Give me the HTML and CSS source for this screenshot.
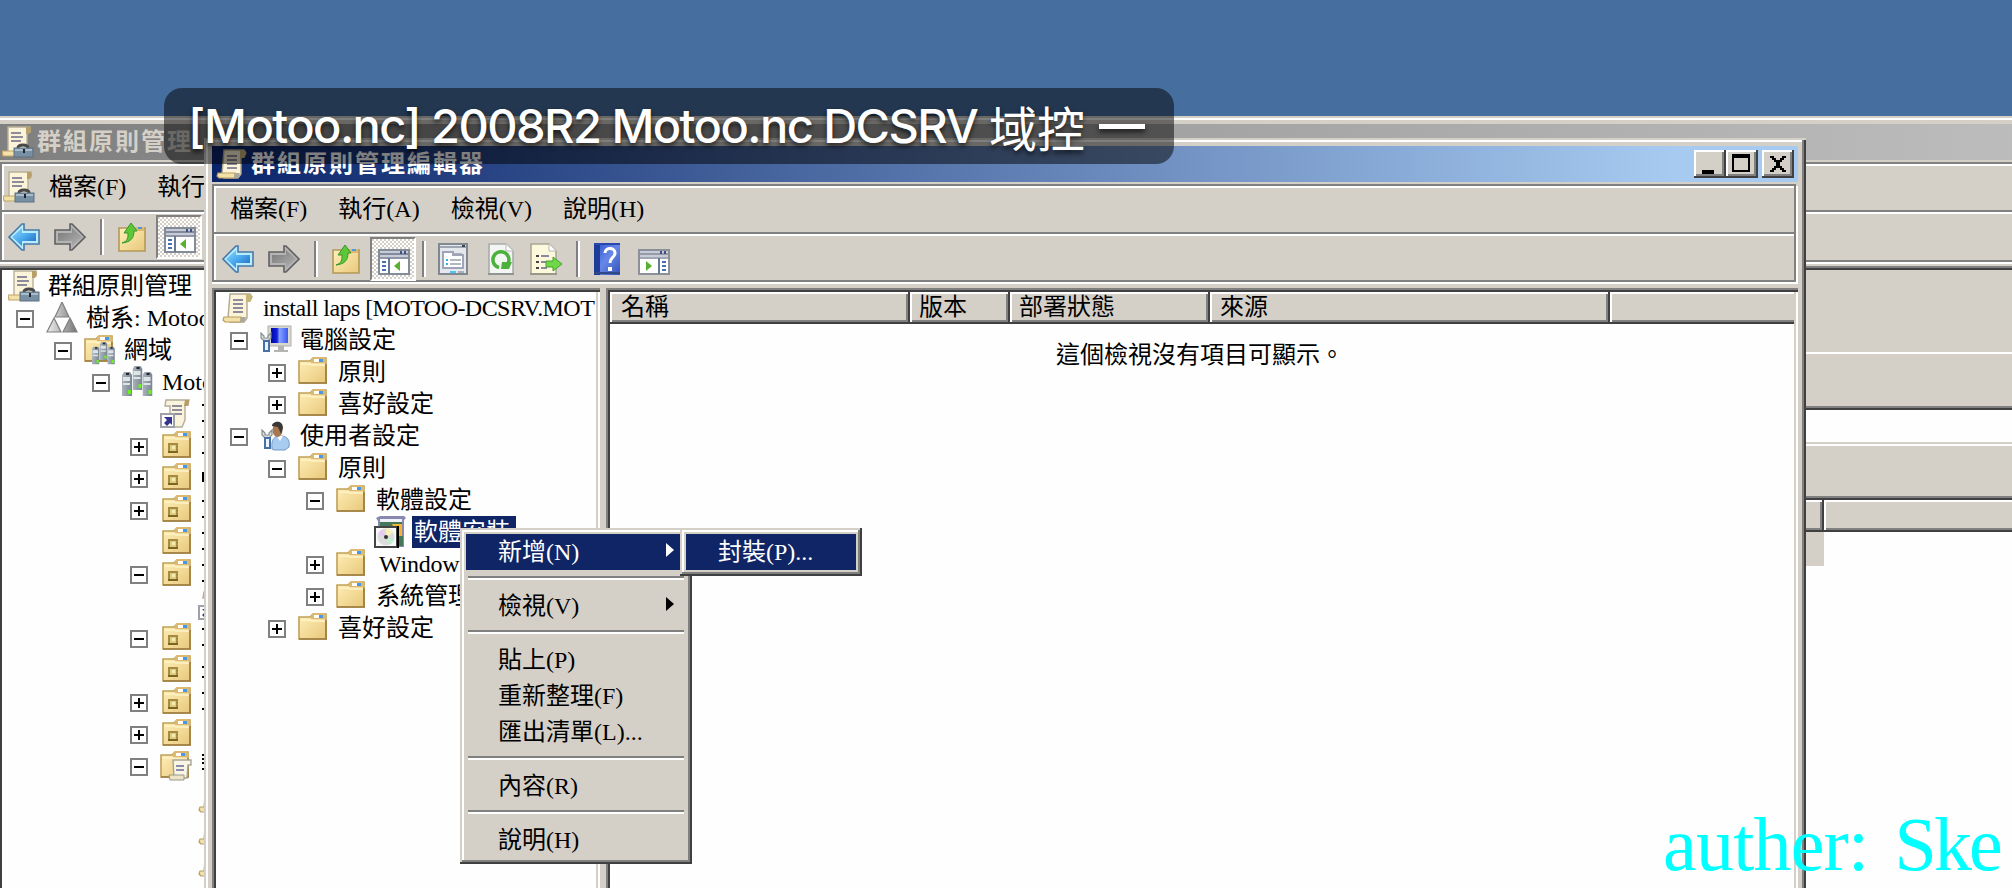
FILE: index.html
```html
<!DOCTYPE html>
<html lang="zh-Hant">
<head>
<meta charset="utf-8">
<title>群組原則管理編輯器</title>
<link rel="stylesheet" href="styles.css">
</head>
<body>
<svg class="defs" width="0" height="0">
  <defs>
    <linearGradient id="gFold" x1="0" y1="0" x2="1" y2="1"><stop offset="0" stop-color="#fff0b8"/><stop offset="1" stop-color="#e8c87c"/></linearGradient>
    <linearGradient id="gBlue" x1="0" y1="0" x2="1" y2="1"><stop offset="0" stop-color="#8fdcff"/><stop offset=".5" stop-color="#49a8ee"/><stop offset="1" stop-color="#1f62b8"/></linearGradient>
    <linearGradient id="gGray" x1="0" y1="0" x2="1" y2="1"><stop offset="0" stop-color="#777"/><stop offset="1" stop-color="#b4b4b4"/></linearGradient>
    <linearGradient id="gScreen" x1="0" y1="0" x2="1" y2="0"><stop offset="0" stop-color="#0008a8"/><stop offset=".35" stop-color="#1020d8"/><stop offset=".5" stop-color="#88a0ff"/><stop offset="1" stop-color="#3858f0"/></linearGradient>
    <linearGradient id="gHelp" x1="0" y1="0" x2="1" y2="1"><stop offset="0" stop-color="#2850c8"/><stop offset=".5" stop-color="#6888e8"/><stop offset="1" stop-color="#3050b8"/></linearGradient>
    <linearGradient id="gSrv" x1="0" y1="0" x2="1" y2="0"><stop offset="0" stop-color="#aab4bc"/><stop offset="1" stop-color="#78858f"/></linearGradient>
    <linearGradient id="gTri" x1="0" y1="0" x2="1" y2="0"><stop offset="0" stop-color="#f0f0f0"/><stop offset="1" stop-color="#757575"/></linearGradient>
  </defs>
  <symbol id="scroll" viewBox="0 0 32 32">
    <path d="M8 2h20l2 3-2 4h-3v17l-3 4H8V26H6z" fill="#fbf4d8" stroke="#b0a890" stroke-width="1.4"/>
    <path d="M24 2h4l2 3-2 5h-4z" fill="#c8b478"/>
    <path d="M2 25h17v5H3l-2-2z" fill="#f2e2a8" stroke="#b89c60" stroke-width="1.2"/>
    <path d="M19 25h5l-2 5h-4z" fill="#a8a8a0"/>
    <path d="M11 8h10M11 12h10M11 16h10M11 20h10" stroke="#8e8c9c" stroke-width="2"/>
  </symbol>
  <symbol id="scrollbox" viewBox="0 0 32 32">
    <path d="M6 1h22v5h-3v20H6z" fill="#fbf4d8" stroke="#b8b098" stroke-width="1.4"/>
    <path d="M24 1h4l1 3-2 4h-3z" fill="#b8a068"/>
    <path d="M0 25h15v5H1z" fill="#f2e2a8" stroke="#c0a468" stroke-width="1.2"/>
    <path d="M9 7h10M9 11h12M9 15h10" stroke="#8e8c9c" stroke-width="2"/>
    <path d="M16 22c0-4 10-4 10 0" fill="none" stroke="#484848" stroke-width="3"/>
    <rect x="12" y="22" width="19" height="9" fill="#7890a4" stroke="#5c7080"/>
    <path d="M13 24h17" stroke="#a8bccc" stroke-width="2"/><rect x="21" y="23" width="2" height="4" fill="#223"/>
  </symbol>
  <symbol id="link" viewBox="0 0 32 32">
    <path d="M6 2h23l-1 5h-3v15l-3 7H10V8H5z" fill="#fbf4dc" stroke="#b4ac98" stroke-width="1.4"/>
    <path d="M25 2h4l-1 6h-4z" fill="#b89c60"/><path d="M12 8h10M12 12h10M14 16h8" stroke="#8e8c9c" stroke-width="2"/>
    <rect x="1" y="16" width="13" height="13" fill="#fff" stroke="#a0a0a8" stroke-width="2"/>
    <path d="M4 19h8v8l-2-2-3 3-3-3 3-3z" fill="#34348c"/>
  </symbol>
  <symbol id="folder" viewBox="0 0 32 32">
    <path d="M1 5h11l3-3h13v25H1z" fill="url(#gFold)" stroke="#c0a058" stroke-width="1.6"/>
    <path d="M13 7V3l2-2h11l2 2v4z" fill="#dcb870"/><rect x="16" y="3" width="5" height="3" fill="#fff"/><rect x="21" y="3" width="4" height="3" fill="#4c98e0"/>
    <path d="M3 8h9l2 1h13" stroke="#fff4c8" stroke-width="1.5" fill="none"/><path d="M1 27h28M28 8v19" stroke="#9c7c40" stroke-width="1.6"/>
  </symbol>
  <symbol id="ou" viewBox="0 0 32 32">
    <g transform="translate(2)"><use href="#folder"/><rect x="7" y="14" width="8" height="8" fill="#dccc80" stroke="#a48c44" stroke-width="2"/><path d="M6 22h10" stroke="#7c6424" stroke-width="2"/><rect x="10" y="16" width="3" height="3" fill="#f4ecb0"/></g>
  </symbol>
  <symbol id="foldscroll" viewBox="0 0 32 32">
    <use href="#folder"/><path d="M13 10h18v5h-3l-1 13H14z" fill="#faf6e4" stroke="#a8a498" stroke-width="1.4"/><path d="M9 25h15v5H10z" fill="#ece4c4" stroke="#98988c"/><path d="M16 16h8M16 20h8" stroke="#8e8cac" stroke-width="2"/>
  </symbol>
  <symbol id="forest" viewBox="0 0 32 32">
    <path d="M16 0l7 15H9zM8 16l7 14H1zM24 16l7 14H17z" fill="url(#gTri)" stroke="#808080" stroke-width="1.2"/>
  </symbol>
  <symbol id="srv" viewBox="0 0 10 24">
    <path d="M0 3l2-3h6l2 3v21H0z" fill="url(#gSrv)"/><path d="M1 5h7v4H1zM1 11h7v2H1z" fill="#dce4e8"/><path d="M4 1h3v2H4z" fill="#223"/><rect x="6" y="18" width="3" height="4" fill="#6cf020"/>
  </symbol>
  <symbol id="domain" viewBox="0 0 32 32">
    <use href="#srv" x="10.5" y="0" width="10" height="24"/><use href="#srv" x="0" y="6" width="10" height="24"/><use href="#srv" x="20.500" y="6" width="10" height="24"/>
  </symbol>
  <symbol id="folddomain" viewBox="0 0 32 32">
    <use href="#folder"/><use href="#domain" x="8" y="8" width="24" height="24"/>
  </symbol>
  <symbol id="wrench" viewBox="0 0 12 20">
    <path d="M1 1v5l3 3h4l3-3V1L8 4v2H4V4z" fill="#d8dcdc" stroke="#889090" stroke-width="1.2"/><rect x="4" y="9" width="5" height="10" fill="#e8f4ff" stroke="#4870a8" stroke-width="2"/>
  </symbol>
  <symbol id="computer" viewBox="0 0 32 32">
    <rect x="8" y="2" width="23" height="20" fill="#d8d8d0" stroke="#b0b0a8"/><rect x="11" y="4" width="17" height="15" fill="url(#gScreen)"/>
    <path d="M18 22h6v4h4v2H14v-2h4z" fill="#b4b4b0"/><use href="#wrench" x="0" y="8" width="12" height="20"/>
  </symbol>
  <symbol id="user" viewBox="0 0 32 32">
    <path d="M12 29c-1-10 2-13 9-13s9 5 8 11l-4 3H14z" fill="#a8ccf0" stroke="#7898c0"/><path d="M17 16l3 5 3-5z" fill="#fff"/>
    <ellipse cx="17.500" cy="10" rx="5" ry="7" fill="#a87850"/><path d="M12 6c0-5 11-7 11 2l-2 6-3-7z" fill="#3c3836"/>
    <use href="#wrench" x="1" y="9" width="12" height="20"/>
  </symbol>
  <symbol id="soft" viewBox="0 0 32 32">
    <path d="M2 2l4-2h24l2 2-2 2v27H4V5z" fill="#8888b0"/><path d="M6 3h22v3H6z" fill="#f0f0f8"/><path d="M6 6h22v5H6z" fill="#447858"/><path d="M18 8h10v14h-4z" fill="#f4b430"/><path d="M24 20h5v10h-5z" fill="#447858"/>
    <rect x="1" y="11" width="22" height="20" fill="#f8f8f8" stroke="#444" stroke-width="2"/><path d="M24 10v22" stroke="#000" stroke-width="2"/>
    <circle cx="12" cy="21" r="8.500" fill="#dcdcdc"/><path d="M12 21V12.500a8.500 8.500 0 0 1 7 4z" fill="#f8f0b8"/><path d="M12 21l8 3a8.500 8.500 0 0 1-5 5z" fill="#c0f0d0"/><path d="M12 21l-8-3a8 8 0 0 1 4-4z" fill="#e8c8f4"/><circle cx="12" cy="21" r="2" fill="#333"/>
  </symbol>
  <symbol id="back" viewBox="0 0 32 30">
    <path d="M1 15L14 2h2v6h15v14H16v6h-2z" fill="#b8ecff" stroke="#4878a8" stroke-width="1.600"/><path d="M4 15l10-9v5h14v8H14v5z" fill="url(#gBlue)"/>
  </symbol>
  <symbol id="fwd" viewBox="0 0 32 30">
    <path d="M31 15L18 2h-2v6H1v14h15v6h2z" fill="#b4b4b4" stroke="#606060" stroke-width="1.600"/><path d="M28 15l-10-9v5H4v8h14v5z" fill="url(#gGray)"/>
  </symbol>
  <symbol id="up" viewBox="0 0 28 30">
    <path d="M1 6h26v23H1z" fill="url(#gFold)" stroke="#b49858" stroke-width="1.600"/><path d="M16 5h10v4H16z" fill="#dcb870"/><path d="M20 5h4v2h-4z" fill="#4c98e0"/>
    <path d="M4 21c6-2 6-5 6-10H6l7-10 6 8h-3c0 7-3 11-12 12z" fill="#5cc838" stroke="#38942c"/>
  </symbol>
  <symbol id="pane" viewBox="0 0 32 26">
    <rect x="1" y="1" width="30" height="24" fill="#fff" stroke="#848c98" stroke-width="2"/><path d="M2 2h28v6H2z" fill="#c8ccd8"/><path d="M2 5h28M2 9h28" stroke="#6c7488" stroke-width="1.600"/><path d="M23 2v3M27 2v3" stroke="#405080" stroke-width="2"/>
    <path d="M11 9v16" stroke="#687898" stroke-width="2"/><path d="M4 13h4M4 17h4M4 21h4" stroke="#4870b0" stroke-width="2"/><path d="M22 12v10l-6-5z" fill="#58b030"/>
  </symbol>
  <symbol id="pane2" viewBox="0 0 32 26">
    <rect x="1" y="1" width="30" height="24" fill="#fff" stroke="#8c9098" stroke-width="2"/><path d="M2 2h28v6H2z" fill="#c8ccd8"/><path d="M2 5h28M2 9h28" stroke="#848c98" stroke-width="1.600"/><path d="M23 2v3M27 2v3" stroke="#405080" stroke-width="2"/>
    <path d="M21 9v16" stroke="#687898" stroke-width="2"/><path d="M24 13h4M24 17h4M24 21h4" stroke="#4870b0" stroke-width="2"/><path d="M8 12v10l6-5z" fill="#58b030"/>
  </symbol>
  <symbol id="props" viewBox="0 0 30 32">
    <rect x="1" y="1" width="28" height="30" fill="#e4e8ec" stroke="#808890" stroke-width="2"/><path d="M2 4h26" stroke="#8890a0" stroke-width="1.500"/><path d="M24 2h3v2h-3z" fill="#345"/>
    <path d="M5 9h10v3h10v13H5z" fill="#fff" stroke="#a0a4b8" stroke-width="2"/><path d="M12 17h11M12 21h11M16 11h8" stroke="#98a0a8" stroke-width="1.600"/><path d="M8 17h2M8 21h2" stroke="#30b0e8" stroke-width="2"/><path d="M12 29h6" stroke="#48c8f8" stroke-width="2"/><path d="M20 29h6" stroke="#a8b0b8" stroke-width="2"/>
  </symbol>
  <symbol id="refresh" viewBox="0 0 26 32">
    <path d="M1 1h17l7 7v23H1z" fill="#f4f6f4" stroke="#a8acac" stroke-width="1.600"/><path d="M18 1v7h7" fill="#fff" stroke="#b8b8b8"/><path d="M11 24.500a8 8 0 1 1 9-4" fill="none" stroke="#4cb03c" stroke-width="3.500"/><path d="M14 19l10 0-3 7h-8z" fill="#4cb03c"/><path d="M0 31h26" stroke="#909494" stroke-width="2"/>
  </symbol>
  <symbol id="export" viewBox="0 0 32 32">
    <path d="M1 1h18l7 7v23H1z" fill="#fcf8dc" stroke="#a8a898" stroke-width="1.600"/><path d="M19 1v7h7" fill="#fff" stroke="#b8b8b0"/><path d="M6 13h3M6 19h3M6 25h3" stroke="#444" stroke-width="2"/><path d="M11 13h8M11 19h6M11 25h6" stroke="#8c88a0" stroke-width="2"/>
    <path d="M16 18h7v-4l9 7-9 7v-4h-7z" fill="#70d848" stroke="#44a030"/><path d="M0 31h27" stroke="#989888" stroke-width="2"/>
  </symbol>
  <symbol id="help" viewBox="0 0 26 32">
    <rect width="26" height="32" fill="url(#gHelp)"/><path d="M0 0h6v32H0z" fill="#1c3c98"/><path d="M0 0h26v2H0z" fill="#2848b0"/><path d="M0 30h26" stroke="#304888" stroke-width="2"/>
    <path d="M11 10c0-6 10-6 10 0 0 5-5 4-5 10" fill="none" stroke="#fff" stroke-width="3"/><rect x="14" y="24" width="4" height="4" fill="#fff"/>
  </symbol>
</svg>

<main class="desktop">
  <section class="window back-window">
    <div class="titlebar inactive"><svg class="ico"><use href="#scrollbox"/></svg><span class="title">群組原則管理</span></div>
    <div class="bars">
      <div class="menubar"><svg class="ico"><use href="#scrollbox"/></svg><span>檔案(F)</span><span>執行(A)</span></div>
      <div class="toolbar">
        <svg class="t-arrow"><use href="#back"/></svg><svg class="t-arrow next"><use href="#fwd"/></svg><i class="tsep"></i>
        <svg class="t-up"><use href="#up"/></svg><span class="pressed"><svg class="t-pane"><use href="#pane"/></svg></span>
      </div>
    </div>
    <div class="back-body">
      <div class="tree back-tree">
        <div class="row l0"><svg class="ico"><use href="#scrollbox"/></svg><span>群組原則管理</span></div>
        <div class="row l1"><i class="box"></i><svg class="ico"><use href="#forest"/></svg><span>樹系: Motoo.nc</span></div>
        <div class="row l2"><i class="box"></i><svg class="ico"><use href="#folddomain"/></svg><span>網域</span></div>
        <div class="row l3"><i class="box"></i><svg class="ico"><use href="#domain"/></svg><span>Motoo.nc</span></div>
        <div class="row l4"><svg class="ico"><use href="#link"/></svg><b class="cut"></b></div>
        <div class="row l4"><i class="box plus"></i><svg class="ico"><use href="#ou"/></svg><b class="cut"></b></div>
        <div class="row l4"><i class="box plus"></i><svg class="ico"><use href="#ou"/></svg><b class="cut solid"></b></div>
        <div class="row l4"><i class="box plus"></i><svg class="ico"><use href="#ou"/></svg><b class="cut"></b></div>
        <div class="row l4"><svg class="ico"><use href="#ou"/></svg><b class="cut"></b></div>
        <div class="row l4"><i class="box"></i><svg class="ico"><use href="#ou"/></svg><b class="cut"></b></div>
        <div class="row l5"><svg class="ico"><use href="#link"/></svg></div>
        <div class="row l4"><i class="box"></i><svg class="ico"><use href="#ou"/></svg><b class="cut"></b></div>
        <div class="row l4"><svg class="ico"><use href="#ou"/></svg><b class="cut low"></b></div>
        <div class="row l4"><i class="box plus"></i><svg class="ico"><use href="#ou"/></svg><b class="cut"></b></div>
        <div class="row l4"><i class="box plus"></i><svg class="ico"><use href="#ou"/></svg></div>
        <div class="row l4"><i class="box"></i><svg class="ico"><use href="#foldscroll"/></svg><b class="cut dots"></b></div>
        <div class="row l5"><svg class="ico"><use href="#scroll"/></svg></div>
        <div class="row l5"><svg class="ico"><use href="#scroll"/></svg></div>
        <div class="row l5"><svg class="ico"><use href="#scroll"/></svg></div>
      </div>
      <div class="details">
        <div class="d-head"></div><div class="d-tabs"></div><div class="d-field"></div><div class="d-label"></div>
        <div class="d-cols"><i></i><i></i></div><div class="d-cell"></div>
      </div>
    </div>
  </section>

  <section class="window front-window">
    <div class="titlebar active">
      <svg class="ico"><use href="#scroll"/></svg><span class="title">群組原則管理編輯器</span>
      <div class="controls">
        <i class="btn"><svg viewBox="0 0 28 24"><path d="M6 18h12v4H6z"/></svg></i>
        <i class="btn"><svg viewBox="0 0 28 24"><path d="M4 2h18v18H4zM6 6v12h14V6z" fill-rule="evenodd"/></svg></i>
        <i class="btn close"><svg viewBox="0 0 28 24"><path d="M6 4h4v2h2v2h4V6h2V4h4v2h-2v2h-2v2h-2v4h2v2h2v2h2v2h-4v-2h-2v-2h-4v2h-2v2H6v-2h2v-2h2v-2h2v-4h-2V8H8V6H6z"/></svg></i>
      </div>
    </div>
    <div class="bars">
      <div class="menubar"><span>檔案(F)</span><span>執行(A)</span><span>檢視(V)</span><span>說明(H)</span></div>
      <div class="toolbar">
        <svg class="t-arrow"><use href="#back"/></svg><svg class="t-arrow next"><use href="#fwd"/></svg><i class="tsep"></i>
        <svg class="t-up"><use href="#up"/></svg><span class="pressed"><svg class="t-pane"><use href="#pane"/></svg></span><i class="tsep tight"></i>
        <svg class="t-props"><use href="#props"/></svg><svg class="t-refresh"><use href="#refresh"/></svg><svg class="t-export"><use href="#export"/></svg><i class="tsep"></i>
        <svg class="t-help"><use href="#help"/></svg><svg class="t-pane last"><use href="#pane2"/></svg>
      </div>
    </div>
    <div class="front-body">
      <div class="tree front-tree">
        <div class="row l0"><svg class="ico"><use href="#scroll"/></svg><span class="root">install laps [MOTOO-DCSRV.MOT</span></div>
        <div class="row l1"><i class="box"></i><svg class="ico"><use href="#computer"/></svg><span>電腦設定</span></div>
        <div class="row l2"><i class="box plus"></i><svg class="ico"><use href="#folder"/></svg><span>原則</span></div>
        <div class="row l2"><i class="box plus"></i><svg class="ico"><use href="#folder"/></svg><span>喜好設定</span></div>
        <div class="row l1"><i class="box"></i><svg class="ico"><use href="#user"/></svg><span>使用者設定</span></div>
        <div class="row l2"><i class="box"></i><svg class="ico"><use href="#folder"/></svg><span>原則</span></div>
        <div class="row l3"><i class="box"></i><svg class="ico"><use href="#folder"/></svg><span>軟體設定</span></div>
        <div class="row l4"><svg class="ico"><use href="#soft"/></svg><span class="selected">軟體安裝</span></div>
        <div class="row l3"><i class="box plus"></i><svg class="ico"><use href="#folder"/></svg><span class="latin">Windows 設定</span></div>
        <div class="row l3"><i class="box plus"></i><svg class="ico"><use href="#folder"/></svg><span>系統管理範本</span></div>
        <div class="row l2"><i class="box plus"></i><svg class="ico"><use href="#folder"/></svg><span>喜好設定</span></div>
      </div>
      <div class="list">
        <div class="cols"><span>名稱</span><span>版本</span><span>部署狀態</span><span>來源</span><span></span></div>
        <p class="empty">這個檢視沒有項目可顯示。</p>
      </div>
    </div>
  </section>

  <div class="popup context">
    <div class="item hot">新增(N)<i class="arrow"></i></div><hr>
    <div class="item">檢視(V)<i class="arrow"></i></div><hr>
    <div class="item">貼上(P)</div><div class="item">重新整理(F)</div><div class="item">匯出清單(L)...</div><hr>
    <div class="item">內容(R)</div><hr>
    <div class="item">說明(H)</div>
  </div>
  <div class="popup submenu"><div class="item hot">封裝(P)...</div></div>

  <div class="banner"><span class="b-main">[Motoo.nc] 2008R2 Motoo.nc DCSRV</span><span class="b-cjk">域控</span><i class="dash"></i></div>
  <div class="signature">auther: <span>Ske</span></div>
</main>
</body>
</html>
```

FILE: styles.css
```css
:root { --face: #d4d0c8; --mid: #808080; --dark: #404040; --navy: #0f2566; }
* { box-sizing: border-box; }
body { margin: 0; overflow: hidden; }
.defs { position: absolute; }
.desktop {
  position: relative; width: 2012px; height: 888px; overflow: hidden; background: #466fa0;
  font: 24px/32px "Liberation Serif", "Noto Sans CJK TC", serif; color: #000; white-space: nowrap;
}
.ico { width: 32px; height: 32px; flex: none; }

/* windows */
.window { position: absolute; background: var(--face); overflow: hidden; display: flex; flex-direction: column; }
.back-window { left: 0; top: 116px; width: 2152px; height: 772px; box-shadow: inset 0 2px var(--face), inset 0 4px #fff; padding-top: 8px; }
.front-window {
  left: 204px; top: 138px; width: 1602px; height: 760px; padding: 8px 8px 0;
  box-shadow: inset 2px 2px var(--face), inset -2px 0 var(--dark), inset -4px 0 var(--mid), inset 4px 4px #fff;
}
.titlebar { height: 36px; flex: none; display: flex; align-items: center; font-weight: bold; letter-spacing: 2px; }
.inactive { background: linear-gradient(90deg, #808080, #c0c0c0); color: var(--face); padding-left: 2px; gap: 3px; }
.active { background: linear-gradient(90deg, #0a246a, #a6caf0 92%); color: #fff; padding: 0 4px; gap: 3px; }
.controls { margin-left: auto; display: flex; align-self: flex-start; padding-top: 4px; }
.btn { width: 32px; height: 28px; padding: 2px; background: var(--face); box-shadow: inset -2px -2px var(--dark), inset 2px 2px #fff, inset -4px -4px var(--mid); }
.btn svg { display: block; width: 28px; height: 24px; }
.close { margin-left: 4px; }
.bars { margin-top: 2px; flex: none; height: 100px; border: 2px solid var(--mid); box-shadow: inset 2px 2px #fff, 0 2px #fff; }
.front-window .bars { width: 1584px; box-shadow: inset 2px 2px #fff, 0 2px #fff, 2px 2px #fff; height: 98px; }
.menubar { height: 48px; border-bottom: 2px solid var(--mid); display: flex; align-items: center; padding-left: 16px; gap: 31px; }
.back-window .menubar { padding-left: 1px; }
.back-window .menubar .ico { margin-right: -17px; }
.toolbar { height: 48px; border-top: 2px solid #fff; display: flex; align-items: center; padding-left: 8px; }
.back-window .toolbar { padding-left: 6px; }
.toolbar svg { flex: none; }
.t-arrow { width: 32px; height: 30px; }
.next { margin-left: 14px; }
.tsep { width: 4px; height: 36px; margin: 0 14px; background: linear-gradient(90deg, var(--mid) 50%, #fff 50%); }
.tsep.tight { margin: 0 12px 0 6px; }
.t-up { width: 28px; height: 30px; margin-right: 10px; }
.pressed {
  width: 46px; height: 44px; display: flex; align-items: center; padding: 6px 0 0 6px;
  border: 2px solid; border-color: var(--mid) #fff #fff var(--mid);
  background: conic-gradient(#fff 25%, var(--face) 0 50%, #fff 0 75%, var(--face) 0) 0 0 / 4px 4px;
}
.t-pane { width: 32px; height: 26px; }
.t-props { width: 30px; height: 32px; }
.t-refresh { width: 26px; height: 32px; margin: 0 16px 0 20px; }
.t-export { width: 32px; height: 32px; }
.t-help { width: 26px; height: 32px; margin-right: 18px; }
.last { margin-top: 5px; }

/* trees */
.tree { background: #fefefe; overflow: hidden; flex: none; }
.row { height: 32px; display: flex; align-items: center; }
.row > span { margin-left: 8px; flex: none; }
.l0 { padding-left: 6px; } .l1 { padding-left: 44px; } .l2 { padding-left: 82px; }
.l3 { padding-left: 120px; } .l4 { padding-left: 158px; } .l5 { padding-left: 196px; }
.box {
  flex: none; width: 18px; height: 18px; margin: 2px 12px 0 -30px; border: 2px solid var(--mid);
  background: linear-gradient(#000, #000) center / 10px 2px no-repeat;
}
.plus { background: linear-gradient(#000, #000) center / 10px 2px no-repeat, linear-gradient(#000, #000) center / 2px 10px no-repeat; }
.row > .selected { background: var(--navy); color: #fff; margin-left: 6px; padding: 0 2px; width: 104px; }
.row > .root { letter-spacing: -.55px; margin-left: 9px; }
.row > .latin { margin-left: 11px; letter-spacing: -.2px; }
.cut { width: 2px; height: 32px; margin-left: 10px; background: linear-gradient(transparent 6px, #000 6px 8px, transparent 8px 22px, #000 22px 24px, transparent 24px); }
.cut.solid { background: linear-gradient(transparent 10px, #000 10px 20px, transparent 20px); }
.cut.low { background: linear-gradient(transparent 12px, #000 12px 14px, transparent 14px 22px, #000 22px 24px, transparent 24px); }
.cut.dots { background: linear-gradient(transparent 4px, #000 4px 6px, transparent 6px 8px, #000 8px 10px, transparent 10px 12px, #000 12px 14px, transparent 14px 18px, #000 18px 20px, transparent 20px); }

.back-body { flex: 1; margin-top: 4px; border-top: 2px solid var(--mid); box-shadow: inset 0 2px var(--dark), inset 2px 0 var(--dark); padding: 2px 0 0 2px; display: flex; }
.back-tree { width: 204px; }
.details { flex: 1; background: #fefefe; }
.d-head { height: 84px; background: var(--face); border-bottom: 2px solid #fff; }
.d-tabs { height: 56px; background: var(--face); border-bottom: 2px solid var(--dark); box-shadow: inset 0 -2px var(--mid); }
.d-field { height: 32px; }
.d-label { height: 58px; background: var(--face); border-bottom: 2px solid var(--dark); box-shadow: inset 0 2px var(--face), inset 0 4px #fff, inset 0 -2px var(--mid); }
.d-cols { height: 32px; display: flex; border-bottom: 2px solid var(--dark); background: var(--face); }
.d-cols i { flex: 1; box-shadow: inset 2px 2px #fff, inset 0 -2px var(--mid); }
.d-cols i:first-child { flex: none; width: 1618px; border-right: 2px solid var(--dark); box-shadow: inset 0 2px #fff, inset -2px -2px var(--mid); }
.d-cell { width: 1618px; height: 34px; background: var(--face); }

.front-body { flex: 1; margin-top: 6px; display: flex; gap: 6px; background: var(--face); }
.front-tree, .list { border: solid var(--mid); border-width: 2px 0 0 2px; padding: 2px 0 0 2px; box-shadow: inset 2px 2px var(--dark), inset -2px 0 #fff, inset -4px 0 var(--face); }
.front-tree { width: 388px; padding-right: 4px; }
.list { flex: 1; min-width: 0; background: #fefefe; padding-right: 4px; }
.cols { height: 32px; display: flex; border-bottom: 2px solid var(--dark); background: var(--face); line-height: 31px; }
.cols span { flex: none; width: 300px; padding-left: 11px; border-right: 2px solid var(--dark); box-shadow: inset 2px 2px #fff, inset -2px -2px var(--mid); }
.cols span:nth-child(2) { width: 100px; padding-left: 9px; }
.cols span:nth-child(3) { width: 200px; padding-left: 9px; }
.cols span:nth-child(4) { width: 400px; padding-left: 10px; }
.cols span:last-child { flex: 1; width: auto; border: 0; box-shadow: inset 2px 2px #fff, inset 0 -2px var(--mid); }
.empty { margin: 15px 0 0 446px; }

/* menus */
.popup { position: absolute; top: 528px; background: var(--face); padding: 6px; box-shadow: inset -2px -2px var(--dark), inset 2px 2px var(--face), inset -4px -4px var(--mid), inset 4px 4px #fff; }
.context { left: 460px; width: 232px; height: 336px; }
.submenu { left: 680px; width: 182px; height: 48px; }
.item { height: 36px; line-height: 36px; padding-left: 32px; display: flex; align-items: center; }
.hot { background: var(--navy); color: #fff; }
.arrow { margin: -4px 12px 0 auto; border: 7px solid transparent; border-left: 8px solid currentColor; border-right: 0; }
hr { margin: 6px 2px 8px; border: 0; height: 4px; border-top: 2px solid var(--mid); border-bottom: 2px solid #fff; }

.banner {
  position: absolute; left: 164px; top: 88px; width: 1010px; height: 76px; border-radius: 18px; background: rgba(0, 0, 0, .5);
  padding-left: 24px; display: flex; align-items: center; color: #fff;
  font: 500 47px/78px Inter, "Noto Sans CJK TC", sans-serif; text-shadow: 0 3px 5px rgba(0, 0, 0, .7);
}
.b-main { width: 801px; letter-spacing: -1.55px; }
.b-cjk { font: 48px/70px "Noto Sans CJK TC", sans-serif; }
.dash { width: 46px; height: 5px; margin-left: 14px; background: #fff; box-shadow: 0 3px 5px rgba(0, 0, 0, .7); }
.signature { position: absolute; left: 1663px; top: 800px; font-size: 76px; line-height: 88px; letter-spacing: -.8px; color: #0ff; }
.signature span { margin-left: 8px; letter-spacing: -3px; }
```
